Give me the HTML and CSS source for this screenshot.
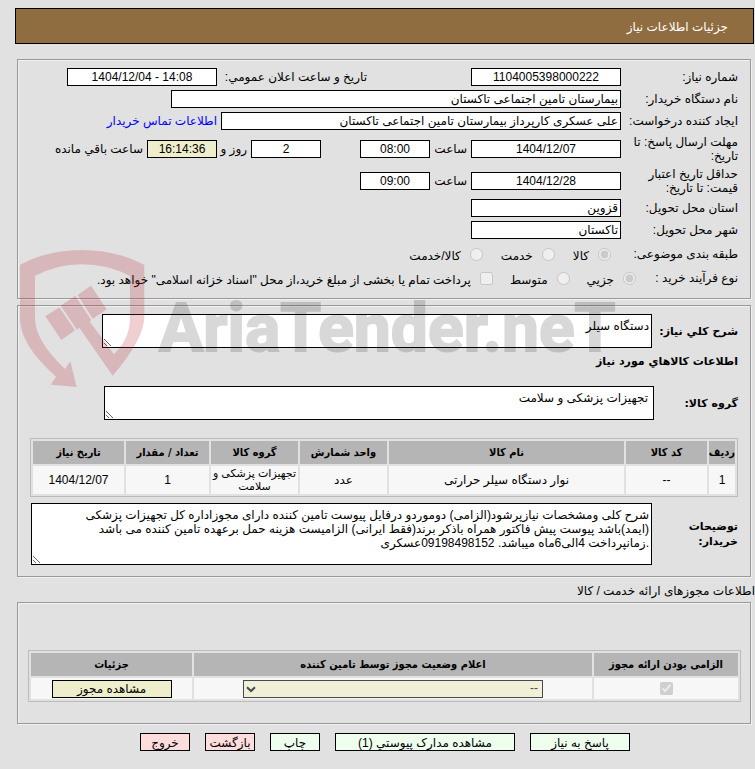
FILE: index.html
```
<!DOCTYPE html>
<html lang="fa" dir="rtl">
<head>
<meta charset="utf-8">
<meta name="viewport" content="width=device-width, initial-scale=1">
<title>جزئیات اطلاعات نیاز</title>
<link rel="stylesheet" href="styles.css">
</head>
<body>
<header class="title-bar"><h1>جزئیات اطلاعات نیاز</h1></header>

<main>
<section class="panel panel-info">
  <div class="row">
    <label class="label" for="need-no">شماره نیاز:</label>
    <input class="field w150 center" id="need-no" value="1104005398000222" readonly>
    <label class="announce" for="announce">تاریخ و ساعت اعلان عمومي:</label>
    <input class="field w150 center" id="announce" dir="ltr" value="1404/12/04 - 14:08" readonly>
  </div>
  <div class="row">
    <label class="label" for="buyer">نام دستگاه خریدار:</label>
    <input class="field w450" id="buyer" value="بیمارستان تامین اجتماعی تاکستان" readonly>
  </div>
  <div class="row">
    <label class="label" for="creator">ایجاد کننده درخواست:</label>
    <input class="field w400" id="creator" value="علی عسکری کارپرداز بیمارستان تامین اجتماعی تاکستان" readonly>
    <a class="contact" href="#">اطلاعات تماس خریدار</a>
  </div>
  <div class="row tall">
    <label class="label" for="deadline">مهلت ارسال پاسخ: تا تاریخ:</label>
    <input class="field w150 center" id="deadline" value="1404/12/07" readonly>
    <label class="unit" for="deadline-time">ساعت</label>
    <input class="field w70 center" id="deadline-time" value="08:00" readonly>
    <input class="field w70 center days" id="days" value="2" readonly>
    <label class="unit and" for="days">روز و</label>
    <input class="field w70 center beige" id="remain" value="16:14:36" readonly>
    <label class="remain" for="remain">ساعت باقي مانده</label>
  </div>
  <div class="row tall">
    <label class="label" for="valid">حداقل تاریخ اعتبار قیمت: تا تاریخ:</label>
    <input class="field w150 center" id="valid" value="1404/12/28" readonly>
    <label class="unit" for="valid-time">ساعت</label>
    <input class="field w70 center" id="valid-time" value="09:00" readonly>
  </div>
  <div class="row">
    <label class="label" for="province">استان محل تحویل:</label>
    <input class="field w150" id="province" value="قزوین" readonly>
  </div>
  <div class="row">
    <label class="label" for="city">شهر محل تحویل:</label>
    <input class="field w150" id="city" value="تاکستان" readonly>
  </div>
  <div class="row options category">
    <span class="label">طبقه بندی موضوعی:</span>
    <label class="option"><input type="radio" name="category" checked disabled><span>کالا</span></label>
    <label class="option"><input type="radio" name="category" disabled><span>خدمت</span></label>
    <label class="option"><input type="radio" name="category" disabled><span>کالا/خدمت</span></label>
  </div>
  <div class="row options process">
    <span class="label">نوع فرآیند خرید :</span>
    <label class="option"><input type="radio" name="process" checked disabled><span>جزیي</span></label>
    <label class="option"><input type="radio" name="process" disabled><span>متوسط</span></label>
    <label class="option"><input type="checkbox" disabled><span>پرداخت تمام یا بخشی از مبلغ خرید،از محل "اسناد خزانه اسلامی" خواهد بود.</span></label>
  </div>
</section>

<section class="panel panel-goods">
  <div class="block">
    <label class="strong" for="summary">شرح كلي نياز:</label>
    <textarea class="area" id="summary" readonly>دستگاه سیلر</textarea>
  </div>
  <h2 class="strong">اطلاعات كالاهاي مورد نياز</h2>
  <div class="block group">
    <label class="strong" for="group">گروه کالا:</label>
    <textarea class="area" id="group" readonly>تجهیزات پزشکی و سلامت</textarea>
  </div>
  <table class="grid goods">
    <colgroup><col class="c1"><col class="c2"><col class="c3"><col class="c4"><col class="c5"><col class="c6"><col class="c7"></colgroup>
    <thead><tr><th>ردیف</th><th>کد کالا</th><th>نام کالا</th><th>واحد شمارش</th><th>گروه کالا</th><th>تعداد / مقدار</th><th>تاریخ نیاز</th></tr></thead>
    <tbody><tr><td>1</td><td>--</td><td>نوار دستگاه سیلر حرارتی</td><td>عدد</td><td class="kind">تجهیزات پزشکی و سلامت</td><td>1</td><td>1404/12/07</td></tr></tbody>
  </table>
  <div class="block notes">
    <label class="strong" for="notes">توضیحات خریدار:</label>
    <textarea class="area" id="notes" readonly>شرح کلی ومشخصات نیازپرشود(الزامی) دوموردو درفایل پیوست تامین کننده دارای مجوزاداره کل تجهیزات پزشکی
(ایمد)باشد پیوست پیش فاکتور همراه باذکر برند(فقط ایرانی) الزامیست هزینه حمل برعهده تامین کننده می باشد
.زمانپرداخت 4الی6ماه میباشد. 09198498152عسکری</textarea>
  </div>
</section>

<p class="caption">اطلاعات مجوزهای ارائه خدمت / کالا</p>

<section class="panel panel-permits">
  <table class="grid permits">
    <colgroup><col class="p1"><col class="p2"><col class="p3"></colgroup>
    <thead><tr><th>الزامی بودن ارائه مجوز</th><th>اعلام وضعیت مجوز توسط تامین کننده</th><th>جزئیات</th></tr></thead>
    <tbody><tr>
      <td><input class="tick" type="checkbox" aria-label="الزامی بودن ارائه مجوز" checked disabled></td>
      <td><span class="picker"><select aria-label="اعلام وضعیت مجوز" disabled><option>--</option></select><svg viewBox="0 0 10 7" aria-hidden="true"><path d="M1 1.2 L5 5 L9 1.2"/></svg></span></td>
      <td><button class="btn beige w120" type="button">مشاهده مجوز</button></td>
    </tr></tbody>
  </table>
</section>

<nav class="actions">
  <button class="btn green w100" type="button">پاسخ به نیاز</button>
  <button class="btn green w180" type="button">مشاهده مدارک پیوستي (1)</button>
  <button class="btn green w50" type="button">چاپ</button>
  <button class="btn red w50" type="button">بازگشت</button>
  <button class="btn red w50" type="button">خروج</button>
</nav>
</main>

<svg class="watermark" viewBox="0 0 610 155" direction="ltr" aria-hidden="true">
  <g class="shield" transform="scale(.3333)">
    <path d="M30 75Q110 30 216 30Q320 30 403 75V230Q403 296 308 407L208 263L201 269L152 197L196 167L243 239L240 246L312 343Q360 296 360 235V108Q295 73 216 73Q140 73 75 108V235Q75 302 165 387L181 364L200 441L122 434L138 410Q30 315 30 235Z"/>
    <path d="M106 229L148 202L195 271L154 300Z"/>
    <path d="M203 165L243 137L290 208L248 236Z"/>
  </g>
  <text x="149" y="111">AriaTender.neT</text>
</svg>
</body>
</html>
```
FILE: styles.css
```
* { box-sizing: border-box; }

body {
  position: relative;
  margin: 0;
  padding: 8px 0 18px 15px;
  background: #e1e1e1;
  color: #000;
  font: 12px/14px "Liberation Sans", "DejaVu Sans", sans-serif;
}

input, textarea, select, button { font: inherit; color: inherit; margin: 0; }

.title-bar {
  display: flex;
  align-items: center;
  height: 36px;
  margin-right: 1px;
  padding: 2px 25px 0;
  border: 1px solid #000;
  background: #8f6d40;
  color: #fff;
}
.title-bar h1 { margin: 0; font-size: 12px; font-weight: normal; }

.panel {
  margin: 0 4px 0 2px;
  border: 1px solid #999;
  box-shadow: 1px 1px 0 #f0f0f0, inset 1px 1px 0 #f0f0f0;
}
.panel-info { margin-top: 15px; padding: 8px 12px 9px; }

.row { display: flex; align-items: center; gap: 4px; margin-bottom: 4px; }
.row .label { flex: none; width: 113px; }
.row.tall { min-height: 28px; }
.row.tall:has(+ .tall) { margin-top: 5px; }

.field {
  flex: none;
  height: 18px;
  padding: 0 2px;
  border: 1px solid #000;
  background: #fff;
}
.center { text-align: center; }
.w50 { width: 50px; }
.w70 { width: 70px; }
.w100 { width: 100px; }
.w120 { width: 120px; }
.w150 { width: 150px; }
.w180 { width: 180px; }
.w400 { width: 400px; }
.w450 { width: 450px; }
.beige { background: #eeeecc; }

.announce { width: 246px; padding-right: 100px; white-space: nowrap; }
.unit { flex: none; width: 33px; white-space: nowrap; }
.days { margin-right: 35px; }
.and { width: 26px; }
.contact { color: #00f; text-decoration: none; }
.remain { white-space: nowrap; }

.options { height: 20px; }
.options .label { white-space: nowrap; }
.option { display: flex; align-items: center; white-space: nowrap; }
.option input { width: 13px; height: 13px; margin-left: 9px; }
.option span { padding-top: 4px; }
.category { gap: 18px; margin: 5px 0 4px; }
.category .label { width: 109px; }
.process { gap: 17px; margin: 0 0 1px; }
.process .label { width: 85px; }

.panel-goods { margin-top: 6px; padding: 8px 12px 11px; }
.block { display: flex; align-items: center; justify-content: space-between; }
.strong {
  margin: 0;
  font: bold 11px/15px "DejaVu Sans", sans-serif;
}
.area {
  display: block;
  width: 550px;
  height: 34px;
  padding: 4px 2px;
  border: 1px solid #000;
  background: #fff;
}
.panel-goods > .block { padding-left: 72px; }
.panel-goods > h2 { margin-top: 6px; }
.panel-goods > .group { margin-top: 17px; padding-left: 74px; }
.group .area { padding-right: 5px; }
.panel-goods > .notes { margin-top: 6px; padding-left: 1px; }
.notes .strong { width: 60px; }
.notes .area { flex: 0 0 621px; height: 62px; }

.grid {
  table-layout: fixed;
  border: 1px solid #bbb;
  border-collapse: separate;
  border-spacing: 2px;
  text-align: center;
}
.grid th {
  height: 23px;
  padding: 0;
  background: #b5b5b5;
  font: bold 11px/14px "DejaVu Sans Condensed", "DejaVu Sans", sans-serif;
}
.grid td { padding: 0; background: #f7f7f7; line-height: 13px; }
.goods { width: 100%; margin-top: 18px; }
.goods td { height: 28px; }
.goods .kind { font-size: 11px; }
.c1 { width: 26px; }
.c2 { width: 81px; }
.c4 { width: 87px; }
.c5 { width: 87px; }
.c6 { width: 83px; }
.c7 { width: 91px; }

.caption { margin: 7px 0 4px; }

.panel-permits { padding: 47px 9px 21px 10px; }
.permits { width: 100%; }
.permits td { height: 21px; }
.p1 { width: 144px; }
.p3 { width: 161px; }
.tick { display: block; width: 13px; height: 13px; margin: 0 auto; }

.picker { position: relative; display: block; width: 300px; margin: 0 auto; opacity: .7; }
.picker select {
  display: block;
  appearance: none;
  width: 100%;
  height: 18px;
  padding: 0 4px;
  border: 1px solid #000;
  border-radius: 0;
  background: #eeeecc;
  color: #000;
  opacity: 1;
}
.picker svg { position: absolute; left: 3px; top: 6px; width: 10px; height: 7px; }
.picker path { fill: none; stroke: #000; stroke-width: 2; }

.btn {
  display: block;
  height: 18px;
  padding: 2px 0 0;
  border: 1px solid #000;
  color: #000;
}
.permits .btn { margin: 0 auto; }
.green { background: #eeffee; }
.red { background: #ffdddd; }
.actions { display: flex; justify-content: center; gap: 15px; margin-top: 9px; }

.watermark {
  position: absolute;
  left: 10px;
  top: 240px;
  width: 610px;
  height: 155px;
  pointer-events: none;
}
.shield { fill: #b8262e; fill-opacity: .22; }
.watermark text {
  fill: #000;
  opacity: .15;
  stroke: #000;
  stroke-width: 2;
  font: bold 66px Roboto, sans-serif;
}
```
